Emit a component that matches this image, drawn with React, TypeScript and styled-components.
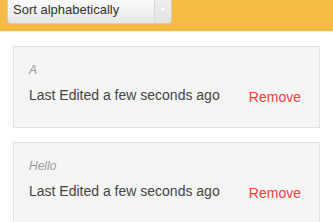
import React from "react";
import styled, { createGlobalStyle } from "styled-components";

const Global = createGlobalStyle`
  html, body { margin: 0; padding: 0; background: #ffffff; }
  body { font-family: "Liberation Sans", Arial, sans-serif; overflow: hidden; }
`;

const Page = styled.div`
  width: 333px;
  display: flex;
  flex-direction: column;
`;

const Header = styled.div`
  height: 31px;
  background: #f4bc42;
  border-bottom: 1px solid #f0eeea;
  padding: 0 7px;
  display: flex;
  align-items: flex-start;
  overflow: hidden;
`;

const Select = styled.div`
  margin-top: -6px;
  width: 165px;
  height: 30px;
  box-sizing: border-box;
  border: 1px solid #d6cfc0;
  border-radius: 4px;
  background: linear-gradient(#ffffff, #e6e6e6);
  display: flex;
  align-items: stretch;
  overflow: hidden;
`;

const SelectLabel = styled.div`
  flex: 1;
  padding: 6px 0 0 5px;
  font-size: 13px;
  line-height: 18px;
  color: #333333;
`;

const SelectArrow = styled.div`
  width: 17px;
  border-left: 1px solid #d8d8d8;
  background: linear-gradient(#f2f2f2, #e2e2e2);
  display: flex;
  justify-content: center;
  padding-top: 13px;
  box-sizing: border-box;
  &::after {
    content: "";
    width: 0;
    height: 0;
    border-left: 3px solid transparent;
    border-right: 3px solid transparent;
    border-top: 4px solid #ffffff;
    filter: drop-shadow(0 0 0.5px #bbbbbb);
  }
`;

const List = styled.div`
  padding: 14px 13px 0;
  display: flex;
  flex-direction: column;
  gap: 14px;
`;

const Card = styled.div`
  background: #f5f5f5;
  border: 1px solid #e0e0e0;
  padding: 15px 15px 20px 15px;
  display: flex;
  flex-direction: column;
`;

const Title = styled.div`
  font-size: 12px;
  line-height: 16px;
  font-style: italic;
  color: #9a9a9a;
`;

const Row = styled.div`
  margin-top: 7px;
  display: flex;
  justify-content: space-between;
  align-items: flex-start;
`;

const Meta = styled.div`
  font-size: 14px;
  line-height: 20px;
  color: #444444;
`;

const Remove = styled.button`
  border: none;
  background: none;
  padding: 2px 3px 0 0;
  margin: 0;
  font-family: inherit;
  font-size: 14px;
  line-height: 20px;
  color: #f2423a;
`;

const notes = ["A", "Hello"];

export default function App() {
  return (
    <>
      <Global />
      <Page>
        <Header>
          <Select>
            <SelectLabel>Sort alphabetically</SelectLabel>
            <SelectArrow />
          </Select>
        </Header>
        <List>
          {notes.map((n) => (
            <Card key={n}>
              <Title>{n}</Title>
              <Row>
                <Meta>Last Edited a few seconds ago</Meta>
                <Remove>Remove</Remove>
              </Row>
            </Card>
          ))}
        </List>
      </Page>
    </>
  );
}
